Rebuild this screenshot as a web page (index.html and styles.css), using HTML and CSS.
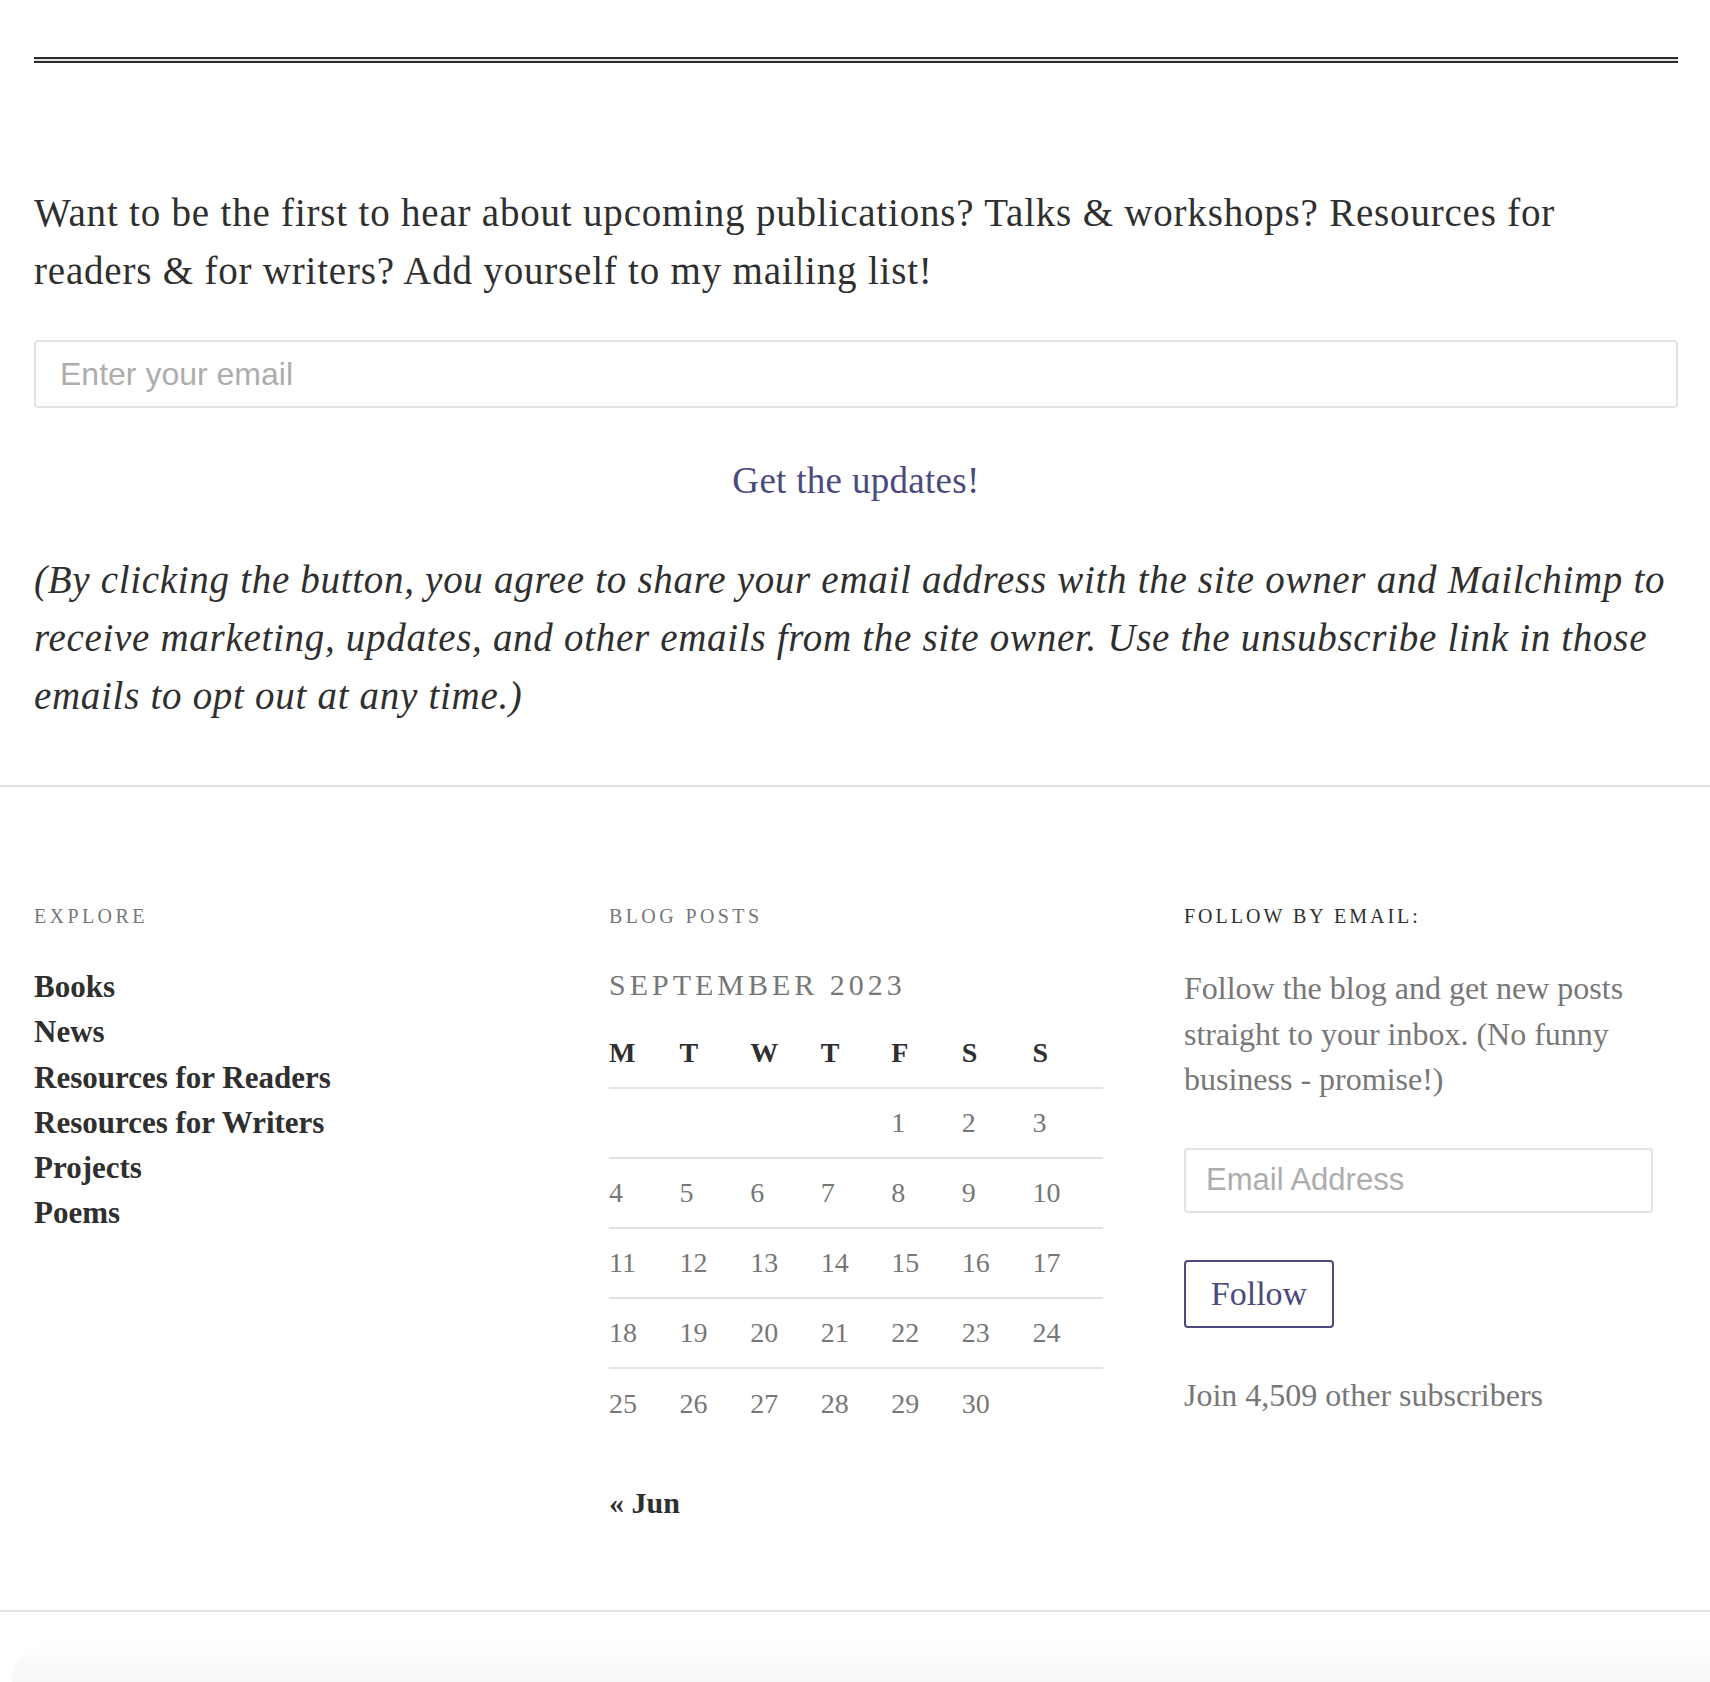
FILE: index.html
```html
<!DOCTYPE html>
<html lang="en">
<head>
<meta charset="utf-8">
<title>Mailing list</title>
<link rel="stylesheet" href="styles.css">
</head>
<body>
<div class="page">
  <div class="top-rule"></div>
  <section class="signup">
    <p class="lead">Want to be the first to hear about upcoming publications? Talks &amp; workshops? Resources for readers &amp; for writers? Add yourself to my mailing list!</p>
    <form class="signup-form">
      <input class="signup-email" type="email" placeholder="Enter your email">
      <button class="cta" type="button">Get the updates!</button>
    </form>
    <p class="disclaimer">(By clicking the button, you agree to share your email address with the site owner and Mailchimp to receive marketing, updates, and other emails from the site owner. Use the unsubscribe link in those emails to opt out at any time.)</p>
  </section>
</div>
<footer class="widgets">
  <div class="widget-grid">
    <div class="widget">
      <h2 class="widget-title">Explore</h2>
      <ul class="nav-list">
        <li><a href="#">Books</a></li>
        <li><a href="#">News</a></li>
        <li><a href="#">Resources for Readers</a></li>
        <li><a href="#">Resources for Writers</a></li>
        <li><a href="#">Projects</a></li>
        <li><a href="#">Poems</a></li>
      </ul>
    </div>
    <div class="widget">
      <h2 class="widget-title">Blog Posts</h2>
      <table class="calendar">
        <caption>September 2023</caption>
        <thead>
          <tr><th>M</th><th>T</th><th>W</th><th>T</th><th>F</th><th>S</th><th>S</th></tr>
        </thead>
        <tbody>
          <tr><td></td><td></td><td></td><td></td><td>1</td><td>2</td><td>3</td></tr>
          <tr><td>4</td><td>5</td><td>6</td><td>7</td><td>8</td><td>9</td><td>10</td></tr>
          <tr><td>11</td><td>12</td><td>13</td><td>14</td><td>15</td><td>16</td><td>17</td></tr>
          <tr><td>18</td><td>19</td><td>20</td><td>21</td><td>22</td><td>23</td><td>24</td></tr>
          <tr><td>25</td><td>26</td><td>27</td><td>28</td><td>29</td><td>30</td><td></td></tr>
        </tbody>
      </table>
      <a class="cal-prev" href="#">« Jun</a>
    </div>
    <div class="widget">
      <h2 class="widget-title dark">Follow by Email:</h2>
      <p class="follow-text">Follow the blog and get new posts straight to your inbox. (No funny business - promise!)</p>
      <input class="follow-email" type="email" placeholder="Email Address">
      <button class="follow-btn" type="button">Follow</button>
      <p class="follow-count">Join 4,509 other subscribers</p>
    </div>
  </div>
</footer>
<div class="bottom-shade"></div>
</body>
</html>
```

FILE: styles.css
```css
* { box-sizing: border-box; }

html, body {
  margin: 0;
  background: #fff;
}

body {
  font-family: "Liberation Serif", "Times New Roman", serif;
  color: #2f2f2f;
}

.page {
  padding: 0 32px 60px 34px;
}

.top-rule {
  margin-top: 57px;
  height: 6px;
  border-top: 2px solid #2b2b2b;
  border-bottom: 2px solid #2b2b2b;
  background: #e4e4e4;
}

.lead {
  margin: 121px 0 0;
  font-size: 39px;
  line-height: 58px;
  letter-spacing: 0.8px;
}

.signup-form {
  margin: 0;
}

.signup-email {
  display: block;
  width: 100%;
  height: 68px;
  margin-top: 40px;
  padding: 0 24px;
  border: 2px solid #e3e3e3;
  border-radius: 4px;
  font-family: "Liberation Sans", Arial, sans-serif;
  font-size: 32px;
  color: #333;
  background: #fff;
}

.signup-email::placeholder,
.follow-email::placeholder {
  color: #adadad;
}

.cta {
  display: block;
  margin: 40px auto 0;
  padding: 4px 16px;
  border: 0;
  background: none;
  font-family: "Liberation Serif", "Times New Roman", serif;
  font-size: 37px;
  line-height: 58px;
  letter-spacing: 0.3px;
  color: #4a4a7e;
}

.disclaimer {
  margin: 37px 0 0;
  font-size: 39px;
  line-height: 58px;
  letter-spacing: 0.7px;
  font-style: italic;
}

.widgets {
  border-top: 2px solid #e3e3e3;
  border-bottom: 2px solid #e3e3e3;
  padding: 114px 32px 85px 34px;
}

.widget-grid {
  display: grid;
  grid-template-columns: repeat(3, 1fr);
  column-gap: 81px;
  align-items: start;
}

.widget-title {
  margin: 0;
  font-size: 20px;
  line-height: 30px;
  font-weight: normal;
  text-transform: uppercase;
  letter-spacing: 3.4px;
  color: #777;
}

.widget-title.dark {
  color: #2f2f2f;
  letter-spacing: 3px;
}

.nav-list {
  list-style: none;
  margin: 33px 0 0;
  padding: 0;
}

.nav-list li {
  font-size: 31px;
  line-height: 45.3px;
  font-weight: bold;
}

.nav-list a,
.cal-prev {
  color: #2f2f2f;
  text-decoration: none;
}

.calendar {
  width: 100%;
  margin-top: 31px;
  border-collapse: collapse;
  table-layout: fixed;
}

.calendar caption {
  text-align: left;
  font-size: 30px;
  line-height: 46px;
  letter-spacing: 4px;
  text-transform: uppercase;
  color: #777;
  padding-bottom: 10px;
}

.calendar th,
.calendar td {
  height: 70px;
  padding: 0;
  text-align: left;
  font-size: 28px;
}

.calendar th {
  font-weight: bold;
  color: #2f2f2f;
}

.calendar td {
  color: #777;
}

.calendar thead tr,
.calendar tbody tr:not(:last-child) {
  border-bottom: 2px solid #e3e3e3;
}

.cal-prev {
  display: block;
  margin-top: 42px;
  font-size: 30px;
  line-height: 45px;
  font-weight: bold;
}

.follow-text {
  margin: 35px 0 0;
  font-size: 32px;
  line-height: 45.5px;
  color: #777;
}

.follow-email {
  display: block;
  width: 95%;
  height: 65px;
  margin-top: 45px;
  padding: 0 20px;
  border: 2px solid #e3e3e3;
  border-radius: 4px;
  font-family: "Liberation Sans", Arial, sans-serif;
  font-size: 31px;
  background: #fff;
}

.follow-btn {
  display: block;
  width: 150px;
  height: 68px;
  margin-top: 47px;
  padding: 0;
  border: 2px solid #4a4a7e;
  border-radius: 4px;
  background: #fff;
  font-family: "Liberation Serif", "Times New Roman", serif;
  font-size: 34px;
  color: #4a4a7e;
}

.follow-count {
  margin: 45px 0 0;
  font-size: 32px;
  line-height: 45.5px;
  color: #777;
}

.bottom-shade {
  height: 44px;
  margin: 28px 0 0 12px;
  border-top-left-radius: 40px;
  background: linear-gradient(#ffffff, #f7f7f7);
}
```
